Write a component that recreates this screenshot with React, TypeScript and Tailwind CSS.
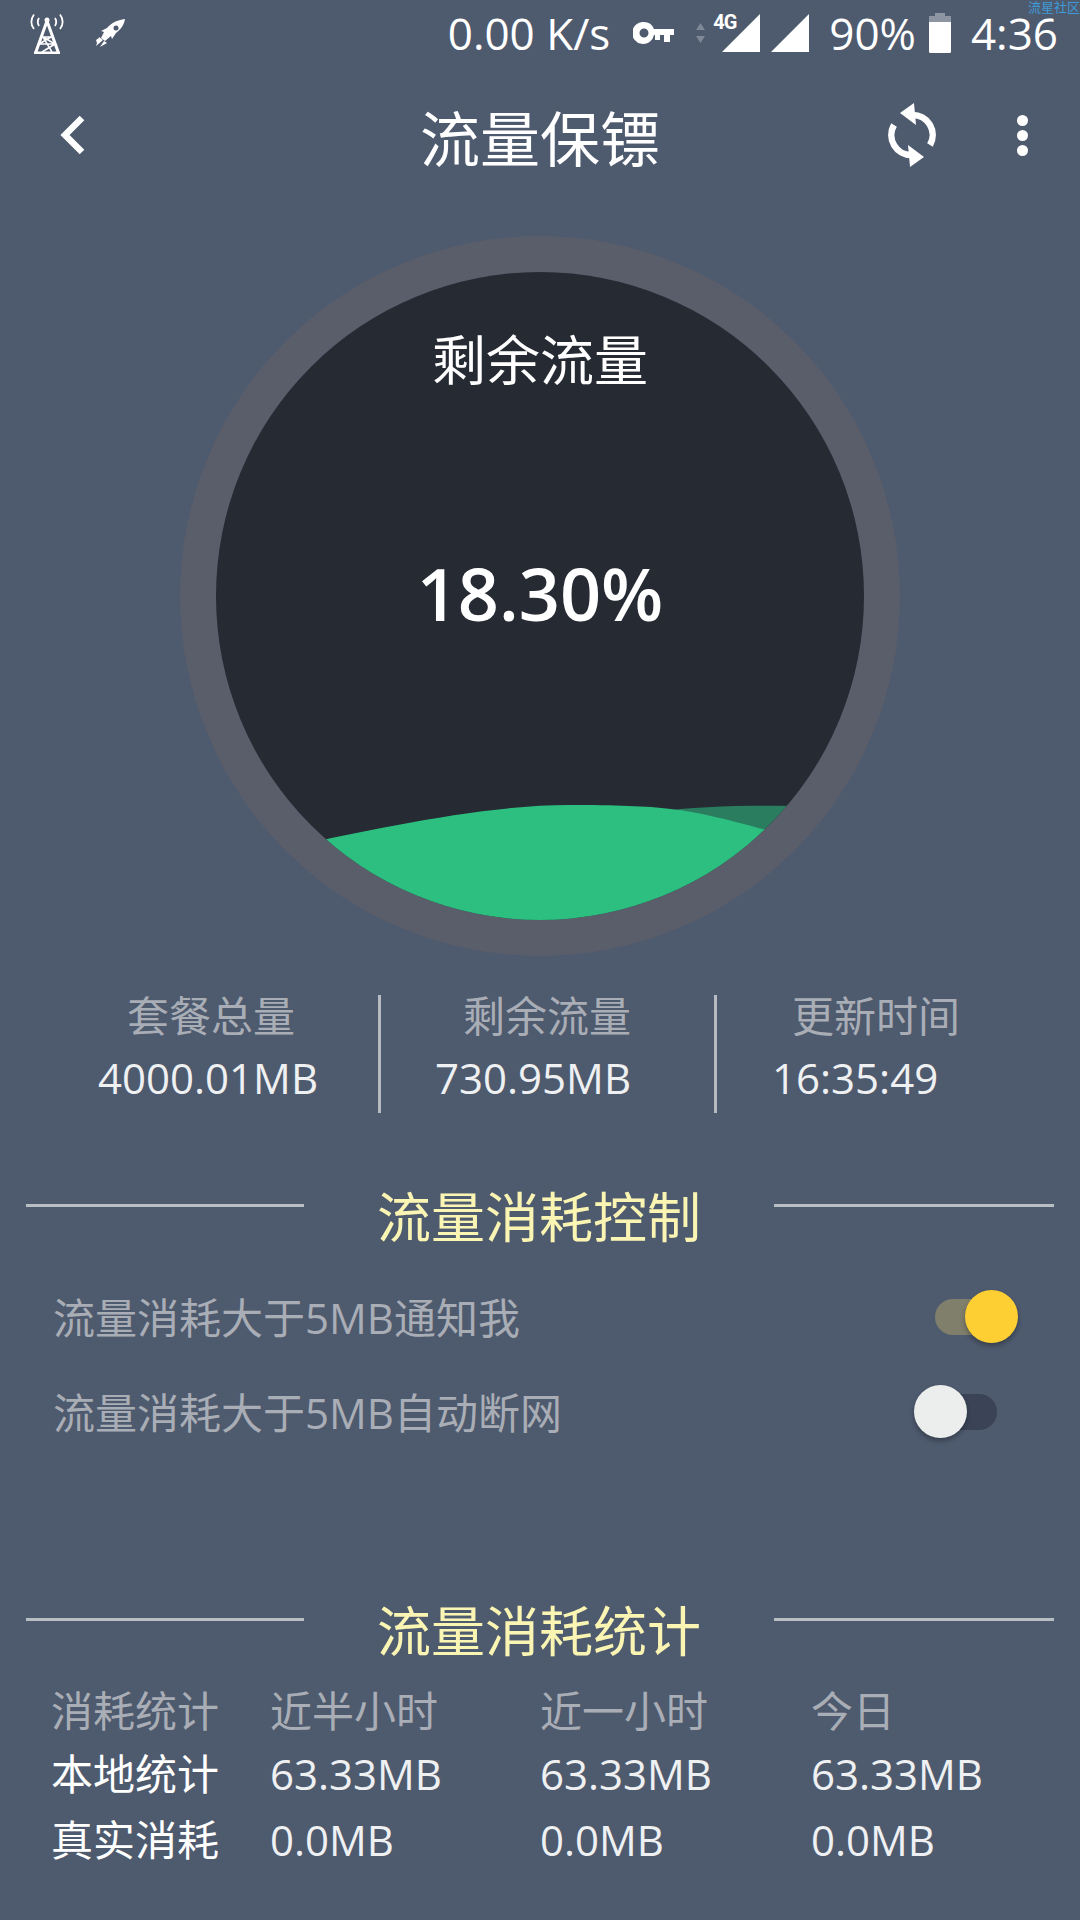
import React from 'react';

const stats = [
  { label: '套餐总量', value: '4000.01MB', width: 'w-[381px]', labelPad: 'pl-[127px]', valuePad: 'pl-[98px]' },
  { label: '剩余流量', value: '730.95MB', width: 'w-[336px]', labelPad: 'pl-[82px]', valuePad: 'pl-[54px]' },
  { label: '更新时间', value: '16:35:49', width: 'w-[363px]', labelPad: 'pl-[75px]', valuePad: 'pl-[55px]' },
];

const table = [
  { color: 'text-[#a9adb5]', cells: ['消耗统计', '近半小时', '近一小时', '今日'], height: 'h-[62px]' },
  { color: 'text-[#eef0f2]', cells: ['本地统计', '63.33MB', '63.33MB', '63.33MB'], height: 'h-[64px]' },
  { color: 'text-[#eef0f2]', cells: ['真实消耗', '0.0MB', '0.0MB', '0.0MB'], height: 'h-[68px]' },
];

const SectionTitle = ({ title }: { title: string }) => (
  <div className="flex h-[60px] items-start justify-between px-[26px]">
    <div className="mt-[15px] h-[3px] w-[278px] bg-[#b9bdc4]" />
    <span className="-mt-[2px] text-[54px] leading-[60px] text-[#fbf5b4]">{title}</span>
    <div className="mt-[15px] h-[3px] w-[280px] bg-[#b9bdc4]" />
  </div>
);

const Toggle = ({ on }: { on: boolean }) => (
  <div className="relative h-[54px] w-[104px]">
    {on ? (
      <>
        <div className="absolute left-[21px] top-[9px] h-[36px] w-[62px] rounded-full bg-[#807f6c]" />
        <div className="absolute left-[51px] top-0 h-[53px] w-[53px] rounded-full bg-[#fdcf32] shadow-[0_3px_5px_rgba(0,0,0,0.3)]" />
      </>
    ) : (
      <>
        <div className="absolute left-[23px] top-[9px] h-[36px] w-[60px] rounded-full bg-[#3a4456]" />
        <div className="absolute left-0 top-0 h-[53px] w-[53px] rounded-full bg-[#eceded] shadow-[0_3px_5px_rgba(0,0,0,0.3)]" />
      </>
    )}
  </div>
);

export default function App() {
  return (
    <div className="relative h-[1920px] w-[1080px] overflow-hidden bg-[#4e5a6e] font-['Open_Sans','Noto_Sans_CJK_SC',sans-serif] text-white">
      <span className="absolute right-0 top-0 text-[13px] leading-[14px] text-[#3f9ad8]">流星社区</span>

      {/* status bar */}
      <div className="flex h-[66px] items-center pl-[29px] pr-[22px]">
        <svg width="36" height="41" viewBox="0 0 36 41" fill="none" stroke="#fff" strokeWidth="2.2">
          <path d="M5 1.5C1.5 6 1.5 12 5 16M31 1.5C34.500 6 34.500 12 31 16M10 5C8.500 7.500 8.500 10.500 10 13M26 5C27.500 7.500 27.500 10.500 26 13" strokeWidth="1.800" />
          <circle cx="18" cy="7" r="2.500" fill="#fff" stroke="none" />
          <path d="M18 8L6.500 40M18 8L29.500 40M5 40H31" strokeWidth="3" />
          <path d="M12 24H24M10 31H26L14 24L23 39M26 31L13 39M22 24L10 31" strokeWidth="1.500" />
        </svg>
        <svg className="ml-[31px]" width="29" height="28" viewBox="0 0 29 28" fill="#fff">
          <path d="M29 0C21 1 15 4 11 9L5 12L8 13L5 19L9 22L15 17L16 20L20 14C25 10 28 6 29 0Z" />
          <path d="M3 18L7 21L0 27Z M0 21L3 19L1 24Z M8 22L11 24L4 28Z" />
          <circle cx="20" cy="9" r="2.500" fill="#4e5a6e" />
        </svg>
        <span className="ml-auto text-[44px] leading-[36px]">0.00 K/s</span>
        <svg className="ml-[23px]" width="41" height="22" viewBox="0 0 41 22" fill="#fff">
          <path fillRule="evenodd" d="M11 0A11 11 0 0 1 21 7H41V13H37V20H31V13H27V18H22V13H21A11 11 0 1 1 11 0ZM11 6.500A4.500 4.500 0 1 0 11 15.500A4.500 4.500 0 1 0 11 6.500Z" />
        </svg>
        <svg className="ml-[22px]" width="9" height="20" viewBox="0 0 9 20" fill="#7f8897">
          <path d="M4.500 0L9 7H0ZM0 13H9L4.500 20Z" />
        </svg>
        <div className="relative ml-[17px] h-[38px] w-[38px]">
          <svg className="h-[38px] w-[38px]" viewBox="0 0 38 38" fill="#fff">
            <path d="M38 0V38H0Z" />
          </svg>
          <span className="absolute left-[-9px] top-[-2px] font-['Roboto',sans-serif] text-[20px] font-bold leading-[20px] tracking-tighter">4G</span>
        </div>
        <svg className="ml-[11px]" width="38" height="38" viewBox="0 0 38 38" fill="#fff">
          <path d="M38 0V38H0Z" />
        </svg>
        <span className="ml-[20px] text-[44px] leading-[36px]">90%</span>
        <svg className="ml-[13px]" width="22" height="40" viewBox="0 0 22 40">
          <path d="M6 0H16V3H22V9H0V3H6Z" fill="#8d95a2" />
          <path d="M0 9H22V38.500Q22 40 20.500 40H1.500Q0 40 0 38.500Z" fill="#fff" />
        </svg>
        <span className="ml-[20px] text-[44px] leading-[36px]">4:36</span>
      </div>

      {/* toolbar */}
      <div className="relative flex h-[138px] items-center justify-between pl-[60px] pr-[52px]">
        <svg width="25" height="40" viewBox="0 0 25 40" fill="none" stroke="#fff" strokeWidth="6.500">
          <path d="M22 3L5 20L22 37" />
        </svg>
        <span className="absolute left-0 right-0 mt-[7px] text-center text-[60px] leading-[70px]">流量保镖</span>
        <div className="flex items-center gap-[81px]">
          <svg width="48" height="64" viewBox="0 0 48 64" fill="none" stroke="#fff" strokeWidth="6.500">
            <path d="M24 12A20 20 0 0 1 42 42" />
            <path d="M24 52A20 20 0 0 1 6 22" />
            <path d="M12 10L26 0L28 22Z" fill="#fff" stroke="none" />
            <path d="M36 54L22 64L20 42Z" fill="#fff" stroke="none" />
          </svg>
          <div className="flex flex-col gap-[4px]">
            <div className="h-[11px] w-[11px] rounded-full bg-white" />
            <div className="h-[11px] w-[11px] rounded-full bg-white" />
            <div className="h-[11px] w-[11px] rounded-full bg-white" />
          </div>
        </div>
      </div>

      {/* gauge */}
      <div className="mx-auto mt-[32px] h-[720px] w-[720px] rounded-full bg-[#5a5e6b] p-[36px]">
        <div className="relative flex h-[648px] w-[648px] flex-col items-center overflow-hidden rounded-full bg-[#252a33]">
          <span className="mt-[55px] text-[54px] leading-[66px]">剩余流量</span>
          <span className="mt-[158px] text-[72px] font-semibold leading-[84px]">18.30%</span>
          <svg className="absolute left-0 top-0" width="648" height="648" viewBox="0 0 648 648">
            <path d="M440 540C480 534 530 533 580 534V648H440Z" fill="#2a7d5f" />
            <path d="M60 578C160 556 270 533 353 533C400 533 430 534 455 537C490 541 520 550 580 566V648H60Z" fill="#2cbf80" />
          </svg>
        </div>
      </div>

      {/* stats */}
      <div className="mt-[39px] flex h-[118px]">
        {stats.map((item, i) => (
          <div key={item.label} className={`${item.width} ${i < 2 ? 'border-r-[3px] border-[#b7bbc2]' : ''} flex flex-col`}>
            <span className={`${item.labelPad} text-[42px] leading-[42px] text-[#a9adb5]`}>{item.label}</span>
            <span className={`${item.valuePad} mt-[17px] text-[42px] leading-[48px] text-[#eef0f2]`}>{item.value}</span>
          </div>
        ))}
      </div>

      {/* control */}
      <div className="mt-[76px]">
        <SectionTitle title="流量消耗控制" />
      </div>
      <div className="mt-[20px] pl-[53px] pr-[62px]">
        <div className="flex h-[95px] items-center justify-between">
          <span className="mt-[2px] text-[42px] leading-[50px] text-[#a9adb5]">流量消耗大于5MB通知我</span>
          <Toggle on />
        </div>
        <div className="flex h-[95px] items-center justify-between">
          <span className="mt-[2px] text-[42px] leading-[50px] text-[#a9adb5]">流量消耗大于5MB自动断网</span>
          <Toggle on={false} />
        </div>
      </div>

      {/* stats table */}
      <div className="mt-[144px]">
        <SectionTitle title="流量消耗统计" />
      </div>
      <div className="mt-[17px] pl-[51px]">
        {table.map((row) => (
          <div key={row.cells[0]} className={`grid ${row.height} grid-cols-[219px_270px_271px_1fr] items-center text-[42px] leading-[50px]`}>
            {row.cells.map((cell, i) => (
              <span key={i} className={i === 0 && row.cells[0] !== '消耗统计' ? 'text-white' : row.color}>{cell}</span>
            ))}
          </div>
        ))}
      </div>
    </div>
  );
}
